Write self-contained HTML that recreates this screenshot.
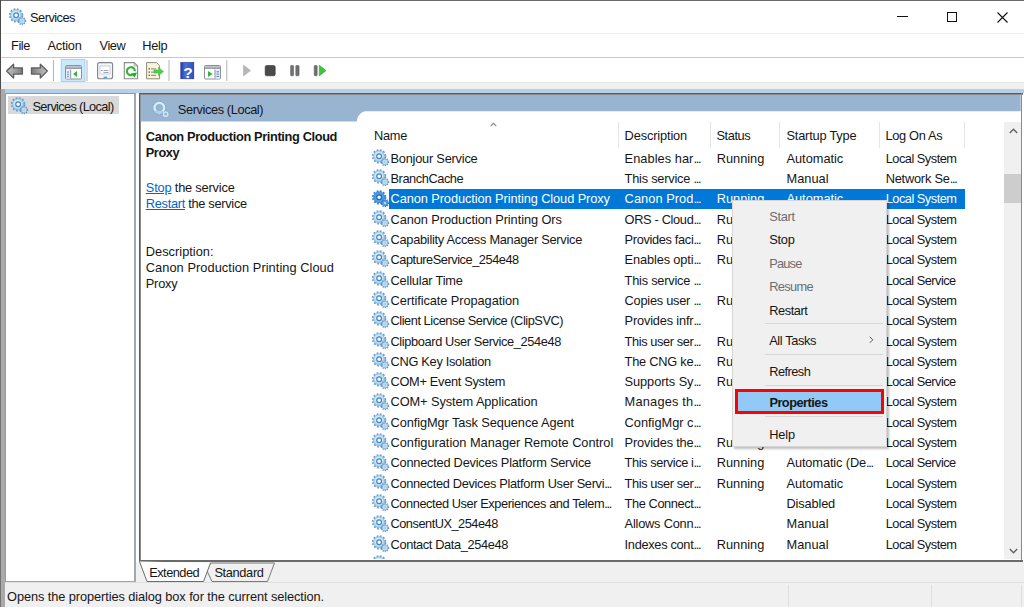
<!DOCTYPE html>
<html><head><meta charset="utf-8"><style>
*{box-sizing:border-box}
html,body{margin:0;padding:0}
body{width:1024px;height:607px;overflow:hidden;position:relative;background:#fff;font-family:"Liberation Sans",sans-serif;font-size:12.8px;color:#161616}
.a{position:absolute}
.t{position:absolute;white-space:nowrap;line-height:16px}
.g{position:absolute;overflow:visible}
.sep{position:absolute;background:#e5e5e5;width:1px}
.el{letter-spacing:-1.3px}
</style></head><body>
<svg width="0" height="0" style="position:absolute"><defs>
<radialGradient id="rg" cx="0.45" cy="0.4" r="0.65"><stop offset="0" stop-color="#e6f7fd"/><stop offset="0.55" stop-color="#bde5f7"/><stop offset="1" stop-color="#8cc2e8"/></radialGradient></defs></svg>

<div class="a" style="left:0;top:0;width:1024px;height:1px;background:#6b6b6b"></div>
<div class="a" style="left:0;top:0;width:1px;height:89px;background:#4a4a4a"></div>
<div class="a" style="left:0;top:89px;width:1px;height:518px;background:#737373"></div>
<svg class="g" style="left:8.20px;top:7.80px" width="18" height="18"><circle cx="8.1" cy="7.3" r="6.35" fill="none" stroke="#6596c9" stroke-width="1.7" stroke-dasharray="1.75 1.58"/>
 <circle cx="8.1" cy="7.3" r="5.5" fill="url(#rg)" stroke="#7eacd8" stroke-width="0.7"/>
 <circle cx="8.1" cy="7.3" r="2.35" fill="#fff" stroke="#4f80b6" stroke-width="1.2"/>
 <circle cx="14.0" cy="13.0" r="3.6" fill="none" stroke="#5f90c4" stroke-width="1.3" stroke-dasharray="1.1 1.2"/>
 <circle cx="14.0" cy="13.0" r="2.9" fill="#c6e6f5" stroke="#6e9ccc" stroke-width="0.7"/>
 <circle cx="14.0" cy="13.0" r="1.0" fill="#f4fbfe" stroke="#6e9ccc" stroke-width="0.5"/></svg>
<div class="t" id="t0" style="left:30.00px;top:9.86px;letter-spacing:-0.510px">Services</div>
<div class="a" style="left:897px;top:16px;width:11px;height:1px;background:#111"></div>
<div class="a" style="left:947px;top:12px;width:10px;height:10px;border:1px solid #111"></div>
<svg class="a" style="left:997px;top:12px" width="11" height="11"><path d="M0.5 0.5L10.5 10.5M10.5 0.5L0.5 10.5" stroke="#111" stroke-width="1.1"/></svg>
<div class="a" style="left:1px;top:33px;width:1023px;height:1px;background:#f0f0f0"></div>
<div class="t" id="t1" style="left:11.10px;top:38.46px;letter-spacing:-0.456px">File</div>
<div class="t" id="t2" style="left:47.40px;top:38.46px;letter-spacing:-0.213px">Action</div>
<div class="t" id="t3" style="left:99.60px;top:38.46px;letter-spacing:-0.454px">View</div>
<div class="t" id="t4" style="left:142.30px;top:38.46px;letter-spacing:-0.332px">Help</div>
<div class="a" style="left:1px;top:57px;width:1023px;height:1px;background:#c8c8c8"></div>
<svg class="a" style="left:0;top:0" width="340" height="86">
<defs>
<linearGradient id="arr" x1="0" y1="0" x2="1" y2="0"><stop offset="0" stop-color="#c4c4c4"/><stop offset="0.6" stop-color="#9a9a9a"/><stop offset="1" stop-color="#7a7a7a"/></linearGradient><linearGradient id="arr2" x1="1" y1="0" x2="0" y2="0"><stop offset="0" stop-color="#c4c4c4"/><stop offset="0.6" stop-color="#9a9a9a"/><stop offset="1" stop-color="#7a7a7a"/></linearGradient>
<linearGradient id="hlp" x1="0" y1="0" x2="1" y2="0"><stop offset="0" stop-color="#1f3fb0"/><stop offset="0.35" stop-color="#4a70d8"/><stop offset="1" stop-color="#2c4fc0"/></linearGradient>
<linearGradient id="tb" x1="0" y1="0" x2="0" y2="1"><stop offset="0" stop-color="#c9ced6"/><stop offset="1" stop-color="#8e96a3"/></linearGradient>
</defs>
<path d="M6.6 71 L13.6 64.2 L13.6 67.9 L22.4 67.9 L22.4 74.1 L13.6 74.1 L13.6 78.1 Z" fill="url(#arr)" stroke="#5c5c5c" stroke-width="1.3" stroke-linejoin="round"/>
<path d="M47.3 71 L40.3 64.2 L40.3 67.9 L31.5 67.9 L31.5 74.1 L40.3 74.1 L40.3 78.1 Z" fill="url(#arr2)" stroke="#5c5c5c" stroke-width="1.3" stroke-linejoin="round"/>
<rect x="53" y="60" width="1" height="21" fill="#b4b4b4"/>
<rect x="61.3" y="59.4" width="23.6" height="22" fill="#cce8ff" stroke="#99d1ff" stroke-width="1"/>
<rect x="65.5" y="65.5" width="16" height="13.5" rx="1" fill="#fff" stroke="#8a8f98" stroke-width="1"/>
<rect x="66" y="66" width="15" height="3" fill="url(#tb)"/>
<rect x="66" y="69.5" width="4.2" height="9" fill="#e8ecf2"/>
<rect x="70.2" y="69.5" width="1" height="9" fill="#8a8f98"/>
<circle cx="68" cy="72" r="0.8" fill="#4a86d0"/><circle cx="68" cy="74.3" r="0.8" fill="#4a86d0"/><circle cx="68" cy="76.6" r="0.8" fill="#4a86d0"/>
<path d="M73 74 L77 71 L77 77 Z" fill="#35b23a"/>
<rect x="86.5" y="60" width="1" height="21" fill="#b4b4b4"/>
<rect x="97.6" y="62.6" width="15" height="16.2" rx="2" fill="#f3f5fa" stroke="#80848c" stroke-width="1.1"/>
<rect x="100" y="66" width="10" height="8" fill="#fff" stroke="#b8bcc8" stroke-width="0.7"/>
<rect x="101" y="70" width="1.5" height="1" fill="#5aaae0"/><rect x="103.5" y="70" width="5" height="0.8" fill="#8a8fa0"/><rect x="103.5" y="72" width="5" height="0.8" fill="#8a8fa0"/>
<rect x="103.6" y="76.6" width="3.5" height="1.6" fill="#29b0e8"/>
<path d="M124.3 62.6 L134.2 62.6 L137.6 66 L137.6 78.8 L124.3 78.8 Z" fill="#fff" stroke="#8c8c8c" stroke-width="1.1"/>
<path d="M134.2 62.8 L134.2 66 L137.4 66" fill="none" stroke="#9a9a9a" stroke-width="0.8"/>
<path d="M134.9 71.2 A4 4 0 1 0 132.4 74.9" fill="none" stroke="#3cb43c" stroke-width="2.2"/>
<path d="M130.8 73.6 L137.2 72.4 L134.6 77.6 Z" fill="#22b022"/>
<path d="M146.6 62.6 L156.5 62.6 L159.6 65.7 L159.6 78.8 L146.6 78.8 Z" fill="#fbf4d8" stroke="#8f8a7a" stroke-width="1"/>
<rect x="148.5" y="68.3" width="1.5" height="1.2" fill="#555"/><rect x="151" y="68.4" width="5" height="1" fill="#7a7fa0"/>
<rect x="148.5" y="71.5" width="1.5" height="1.2" fill="#555"/><rect x="151" y="71.6" width="5" height="1" fill="#7a7fa0"/>
<rect x="148.5" y="74.7" width="1.5" height="1.2" fill="#555"/><rect x="151" y="74.8" width="5" height="1" fill="#7a7fa0"/>
<path d="M154 70 L158.5 70 L158.5 67.6 L163.5 71.5 L158.5 75.4 L158.5 73 L154 73 Z" fill="#4fcf4a" stroke="#3aa83a" stroke-width="0.5"/>
<rect x="168.5" y="60" width="1" height="21" fill="#b4b4b4"/>
<rect x="180.8" y="62.5" width="13" height="16.3" fill="url(#hlp)" stroke="#1a2f8a" stroke-width="0.6"/>
<text x="188" y="77.6" font-family="Liberation Sans" font-weight="bold" font-size="15.5" fill="#fff" text-anchor="middle">?</text>
<rect x="204.5" y="65.5" width="16" height="13.5" rx="1" fill="#fff" stroke="#8a8f98" stroke-width="1"/>
<rect x="205" y="66" width="15" height="3" fill="url(#tb)"/>
<rect x="215.3" y="69.5" width="4.7" height="9" fill="#e8ecf2"/>
<rect x="214.5" y="69.5" width="1" height="9" fill="#8a8f98"/>
<rect x="216.5" y="71.3" width="2.5" height="1" fill="#4a86d0"/><rect x="216.5" y="73.6" width="2.5" height="1" fill="#4a86d0"/><rect x="216.5" y="75.9" width="2.5" height="1" fill="#4a86d0"/>
<path d="M208 71 L212.5 74 L208 77 Z" fill="#35b23a"/>
<rect x="226.3" y="60" width="1" height="21" fill="#b4b4b4"/>
<path d="M243.6 65.3 L250.4 70.6 L243.6 75.8 Z" fill="#b8b8b8" stroke="#a0a0a0" stroke-width="0.6" stroke-linejoin="round"/>
<rect x="265.2" y="65.5" width="10" height="10.3" rx="1.6" fill="#4a4a4a" stroke="#333" stroke-width="0.6"/>
<rect x="290.6" y="65.5" width="3" height="10.3" rx="0.7" fill="#707070" stroke="#555" stroke-width="0.5"/>
<rect x="295.8" y="65.5" width="3.3" height="10.3" rx="0.7" fill="#707070" stroke="#555" stroke-width="0.5"/>
<rect x="314.2" y="65.5" width="3" height="10.3" rx="0.7" fill="#707070" stroke="#555" stroke-width="0.5"/>
<path d="M319.3 65.3 L326 70.6 L319.3 75.9 Z" fill="#3cc83c" stroke="#2aa02a" stroke-width="0.6" stroke-linejoin="round"/>
</svg>
<div class="a" style="left:1px;top:82px;width:1023px;height:7px;background:#f0f0f0;border-top:1px solid #e6e6e6"></div>
<div class="a" style="left:1px;top:89px;width:4px;height:518px;background:#aaaaaa"></div>
<div class="a" style="left:5px;top:89px;width:1019px;height:4px;background:#b6cfe9"></div>
<div class="a" style="left:5px;top:93px;width:131px;height:490px;border:1px solid #959aa2;border-right:2px solid #a2a6ad;border-bottom:2px solid #a2a6ad;background:#fff"></div>
<div class="a" style="left:8.3px;top:95.7px;width:110.4px;height:18.4px;background:#d9d9d9"></div>
<svg class="g" style="left:9.90px;top:96.90px" width="18" height="18"><circle cx="8.1" cy="7.3" r="6.35" fill="none" stroke="#6596c9" stroke-width="1.7" stroke-dasharray="1.75 1.58"/>
 <circle cx="8.1" cy="7.3" r="5.5" fill="url(#rg)" stroke="#7eacd8" stroke-width="0.7"/>
 <circle cx="8.1" cy="7.3" r="2.35" fill="#fff" stroke="#4f80b6" stroke-width="1.2"/>
 <circle cx="14.0" cy="13.0" r="3.6" fill="none" stroke="#5f90c4" stroke-width="1.3" stroke-dasharray="1.1 1.2"/>
 <circle cx="14.0" cy="13.0" r="2.9" fill="#c6e6f5" stroke="#6e9ccc" stroke-width="0.7"/>
 <circle cx="14.0" cy="13.0" r="1.0" fill="#f4fbfe" stroke="#6e9ccc" stroke-width="0.5"/></svg>
<div class="t" id="t5" style="left:32.50px;top:98.76px;letter-spacing:-0.672px">Services (Local)</div>
<div class="a" style="left:138.7px;top:93px;width:884px;height:468.5px;border-left:1px solid #5a5a5a;border-top:1px solid #5a5a5a;background:#fff"></div>
<div class="a" style="left:139.7px;top:94px;width:883px;height:1px;background:#8c8c8c"></div>
<div class="a" style="left:139.7px;top:94px;width:1px;height:467px;background:#8c8c8c"></div>
<div class="a" style="left:1020.7px;top:93px;width:1.8px;height:468.5px;background:#8a8a8a"></div>
<div class="a" style="left:138.7px;top:559.5px;width:884px;height:2px;background:#6a6a6a"></div>
<svg class="a" style="left:0;top:0" width="1024" height="130"><path d="M140.7 95 H1020.7 V111.2 H365.5 Q360.5 111.5 357.6 117.5 L356.7 121.6 H140.7 Z" fill="#99b4d1"/></svg>
<svg class="g" style="left:151.90px;top:101.10px" width="18" height="18"><circle cx="7.3" cy="6.7" r="6.4" fill="none" stroke="#7d9cc0" stroke-width="1.3" stroke-dasharray="1.4 2.3" opacity="0.8"/>
 <circle cx="7.3" cy="6.7" r="4.7" fill="none" stroke="#d6eef9" stroke-width="2.6"/>
 <circle cx="7.3" cy="6.7" r="3.3" fill="none" stroke="#8aa6c6" stroke-width="0.6"/>
 <path d="M3.6 9.6 A4.7 4.7 0 0 0 10.6 10" fill="none" stroke="#a9d4f4" stroke-width="2.2"/>
 <circle cx="13.6" cy="13.2" r="3.3" fill="none" stroke="#7d9cc0" stroke-width="1.1" stroke-dasharray="1.0 1.3" opacity="0.8"/>
 <circle cx="13.6" cy="13.2" r="2.2" fill="none" stroke="#c9e6f5" stroke-width="1.6"/></svg>
<div class="t" id="t6" style="left:177.80px;top:102.36px;letter-spacing:-0.397px">Services (Local)</div>
<div class="t" id="t7" style="left:145.80px;top:128.56px;font-weight:bold;letter-spacing:-0.365px">Canon Production Printing Cloud</div>
<div class="t" id="t8" style="left:145.80px;top:144.96px;font-weight:bold;letter-spacing:-0.459px">Proxy</div>
<div class="t" id="t9" style="left:145.80px;top:179.86px;letter-spacing:-0.185px"><span style="color:#0066cc;text-decoration:underline">Stop</span> the service</div>
<div class="t" id="t10" style="left:145.80px;top:195.86px;letter-spacing:-0.299px"><span style="color:#0066cc;text-decoration:underline">Restart</span> the service</div>
<div class="t" id="t11" style="left:145.80px;top:243.96px;letter-spacing:0.013px">Description:</div>
<div class="t" id="t12" style="left:145.80px;top:259.96px;letter-spacing:0.058px">Canon Production Printing Cloud</div>
<div class="t" id="t13" style="left:145.80px;top:275.76px;letter-spacing:-0.234px">Proxy</div>
<div class="a" style="left:141.0px;top:111.3px;width:863px;height:448.2px;overflow:hidden">
<div class="t" id="t14" style="left:233.00px;top:17.16px;letter-spacing:-0.288px">Name</div>
<svg class="a" style="left:348.6px;top:10.8px" width="8" height="5"><path d="M0.8 4L3.4 1.3L6.2 4" stroke="#8a8a8a" fill="none" stroke-width="1.1"/></svg>
<div class="t" id="t15" style="left:483.60px;top:17.16px;letter-spacing:-0.143px">Description</div>
<div class="t" id="t16" style="left:575.50px;top:17.16px;letter-spacing:-0.429px">Status</div>
<div class="t" id="t17" style="left:645.50px;top:17.16px;letter-spacing:-0.210px">Startup Type</div>
<div class="t" id="t18" style="left:744.50px;top:17.16px;letter-spacing:-0.321px">Log On As</div>
<div class="sep" style="left:477.0px;top:10.9px;height:25.5px"></div>
<div class="sep" style="left:569.0px;top:10.9px;height:25.5px"></div>
<div class="sep" style="left:638.0px;top:10.9px;height:25.5px"></div>
<div class="sep" style="left:738.0px;top:10.9px;height:25.5px"></div>
<div class="sep" style="left:823.0px;top:10.9px;height:25.5px"></div>
<svg class="g" style="left:230.40px;top:37.60px" width="18" height="18"><circle cx="8.1" cy="7.3" r="6.35" fill="none" stroke="#6596c9" stroke-width="1.7" stroke-dasharray="1.75 1.58"/>
 <circle cx="8.1" cy="7.3" r="5.5" fill="url(#rg)" stroke="#7eacd8" stroke-width="0.7"/>
 <circle cx="8.1" cy="7.3" r="2.35" fill="#fff" stroke="#4f80b6" stroke-width="1.2"/>
 <circle cx="14.0" cy="13.0" r="3.6" fill="none" stroke="#5f90c4" stroke-width="1.3" stroke-dasharray="1.1 1.2"/>
 <circle cx="14.0" cy="13.0" r="2.9" fill="#c6e6f5" stroke="#6e9ccc" stroke-width="0.7"/>
 <circle cx="14.0" cy="13.0" r="1.0" fill="#f4fbfe" stroke="#6e9ccc" stroke-width="0.5"/></svg>
<div class="t" id="t19" style="left:249.50px;top:39.36px;letter-spacing:-0.224px">Bonjour Service</div>
<div class="t" id="t20" style="left:483.60px;top:39.36px;letter-spacing:0.047px">Enables har<span class="el">...</span></div>
<div class="t" id="t21" style="left:575.80px;top:39.36px;letter-spacing:-0.035px">Running</div>
<div class="t" id="t22" style="left:645.50px;top:39.36px;letter-spacing:-0.019px">Automatic</div>
<div class="t" id="t23" style="left:744.70px;top:39.36px;letter-spacing:-0.500px">Local System</div>
<svg class="g" style="left:230.40px;top:57.92px" width="18" height="18"><circle cx="8.1" cy="7.3" r="6.35" fill="none" stroke="#6596c9" stroke-width="1.7" stroke-dasharray="1.75 1.58"/>
 <circle cx="8.1" cy="7.3" r="5.5" fill="url(#rg)" stroke="#7eacd8" stroke-width="0.7"/>
 <circle cx="8.1" cy="7.3" r="2.35" fill="#fff" stroke="#4f80b6" stroke-width="1.2"/>
 <circle cx="14.0" cy="13.0" r="3.6" fill="none" stroke="#5f90c4" stroke-width="1.3" stroke-dasharray="1.1 1.2"/>
 <circle cx="14.0" cy="13.0" r="2.9" fill="#c6e6f5" stroke="#6e9ccc" stroke-width="0.7"/>
 <circle cx="14.0" cy="13.0" r="1.0" fill="#f4fbfe" stroke="#6e9ccc" stroke-width="0.5"/></svg>
<div class="t" id="t24" style="left:249.50px;top:59.68px;letter-spacing:-0.440px">BranchCache</div>
<div class="t" id="t25" style="left:483.60px;top:59.68px;letter-spacing:-0.231px">This service <span class="el">...</span></div>
<div class="t" id="t26" style="left:645.50px;top:59.68px;letter-spacing:0.016px">Manual</div>
<div class="t" id="t27" style="left:744.70px;top:59.68px;letter-spacing:-0.219px">Network Se<span class="el">...</span></div>
<div class="a" style="left:248.20px;top:77.53px;width:575.80px;height:20.2px;background:#0078d7"></div>
<svg class="g" style="left:230.40px;top:78.23px" width="18" height="18"><circle cx="8.1" cy="7.3" r="6.35" fill="none" stroke="#2a78d0" stroke-width="1.7" stroke-dasharray="1.75 1.58"/>
 <circle cx="8.1" cy="7.3" r="5.5" fill="#4d9de6" stroke="#2a76cc" stroke-width="0.7"/>
 <circle cx="8.1" cy="7.3" r="2.35" fill="#fff" stroke="#1f65b8" stroke-width="1.2"/>
 <circle cx="14.0" cy="13.0" r="3.6" fill="none" stroke="#2a78d0" stroke-width="1.3" stroke-dasharray="1.1 1.2"/>
 <circle cx="14.0" cy="13.0" r="2.9" fill="#5aa2e8" stroke="#2a76cc" stroke-width="0.7"/>
 <circle cx="14.0" cy="13.0" r="1.0" fill="#cfe6fa"/></svg>
<div class="t" id="t28" style="left:249.50px;top:80.00px;color:#fff;letter-spacing:-0.087px">Canon Production Printing Cloud Proxy</div>
<div class="t" id="t29" style="left:483.60px;top:80.00px;color:#fff;letter-spacing:0.052px">Canon Prod<span class="el">...</span></div>
<div class="t" id="t30" style="left:575.80px;top:80.00px;color:#fff;letter-spacing:-0.035px">Running</div>
<div class="t" id="t31" style="left:645.50px;top:80.00px;color:#fff;letter-spacing:-0.019px">Automatic</div>
<div class="t" id="t32" style="left:744.70px;top:80.00px;color:#fff;letter-spacing:-0.500px">Local System</div>
<svg class="g" style="left:230.40px;top:98.55px" width="18" height="18"><circle cx="8.1" cy="7.3" r="6.35" fill="none" stroke="#6596c9" stroke-width="1.7" stroke-dasharray="1.75 1.58"/>
 <circle cx="8.1" cy="7.3" r="5.5" fill="url(#rg)" stroke="#7eacd8" stroke-width="0.7"/>
 <circle cx="8.1" cy="7.3" r="2.35" fill="#fff" stroke="#4f80b6" stroke-width="1.2"/>
 <circle cx="14.0" cy="13.0" r="3.6" fill="none" stroke="#5f90c4" stroke-width="1.3" stroke-dasharray="1.1 1.2"/>
 <circle cx="14.0" cy="13.0" r="2.9" fill="#c6e6f5" stroke="#6e9ccc" stroke-width="0.7"/>
 <circle cx="14.0" cy="13.0" r="1.0" fill="#f4fbfe" stroke="#6e9ccc" stroke-width="0.5"/></svg>
<div class="t" id="t33" style="left:249.50px;top:100.31px;letter-spacing:-0.076px">Canon Production Printing Ors</div>
<div class="t" id="t34" style="left:483.60px;top:100.31px;letter-spacing:-0.339px">ORS - Cloud<span class="el">...</span></div>
<div class="t" id="t35" style="left:575.80px;top:100.31px;letter-spacing:-0.035px">Running</div>
<div class="t" id="t36" style="left:645.50px;top:100.31px;letter-spacing:-0.019px">Automatic</div>
<div class="t" id="t37" style="left:744.70px;top:100.31px;letter-spacing:-0.500px">Local System</div>
<svg class="g" style="left:230.40px;top:118.86px" width="18" height="18"><circle cx="8.1" cy="7.3" r="6.35" fill="none" stroke="#6596c9" stroke-width="1.7" stroke-dasharray="1.75 1.58"/>
 <circle cx="8.1" cy="7.3" r="5.5" fill="url(#rg)" stroke="#7eacd8" stroke-width="0.7"/>
 <circle cx="8.1" cy="7.3" r="2.35" fill="#fff" stroke="#4f80b6" stroke-width="1.2"/>
 <circle cx="14.0" cy="13.0" r="3.6" fill="none" stroke="#5f90c4" stroke-width="1.3" stroke-dasharray="1.1 1.2"/>
 <circle cx="14.0" cy="13.0" r="2.9" fill="#c6e6f5" stroke="#6e9ccc" stroke-width="0.7"/>
 <circle cx="14.0" cy="13.0" r="1.0" fill="#f4fbfe" stroke="#6e9ccc" stroke-width="0.5"/></svg>
<div class="t" id="t38" style="left:249.50px;top:120.63px;letter-spacing:-0.276px">Capability Access Manager Service</div>
<div class="t" id="t39" style="left:483.60px;top:120.63px;letter-spacing:-0.342px">Provides faci<span class="el">...</span></div>
<div class="t" id="t40" style="left:575.80px;top:120.63px;letter-spacing:-0.035px">Running</div>
<div class="t" id="t41" style="left:645.50px;top:120.63px;letter-spacing:0.016px">Manual</div>
<div class="t" id="t42" style="left:744.70px;top:120.63px;letter-spacing:-0.500px">Local System</div>
<svg class="g" style="left:230.40px;top:139.18px" width="18" height="18"><circle cx="8.1" cy="7.3" r="6.35" fill="none" stroke="#6596c9" stroke-width="1.7" stroke-dasharray="1.75 1.58"/>
 <circle cx="8.1" cy="7.3" r="5.5" fill="url(#rg)" stroke="#7eacd8" stroke-width="0.7"/>
 <circle cx="8.1" cy="7.3" r="2.35" fill="#fff" stroke="#4f80b6" stroke-width="1.2"/>
 <circle cx="14.0" cy="13.0" r="3.6" fill="none" stroke="#5f90c4" stroke-width="1.3" stroke-dasharray="1.1 1.2"/>
 <circle cx="14.0" cy="13.0" r="2.9" fill="#c6e6f5" stroke="#6e9ccc" stroke-width="0.7"/>
 <circle cx="14.0" cy="13.0" r="1.0" fill="#f4fbfe" stroke="#6e9ccc" stroke-width="0.5"/></svg>
<div class="t" id="t43" style="left:249.50px;top:140.94px;letter-spacing:-0.465px">CaptureService_254e48</div>
<div class="t" id="t44" style="left:483.60px;top:140.94px;letter-spacing:-0.135px">Enables opti<span class="el">...</span></div>
<div class="t" id="t45" style="left:575.80px;top:140.94px;letter-spacing:-0.035px">Running</div>
<div class="t" id="t46" style="left:645.50px;top:140.94px;letter-spacing:0.016px">Manual</div>
<div class="t" id="t47" style="left:744.70px;top:140.94px;letter-spacing:-0.500px">Local System</div>
<svg class="g" style="left:230.40px;top:159.50px" width="18" height="18"><circle cx="8.1" cy="7.3" r="6.35" fill="none" stroke="#6596c9" stroke-width="1.7" stroke-dasharray="1.75 1.58"/>
 <circle cx="8.1" cy="7.3" r="5.5" fill="url(#rg)" stroke="#7eacd8" stroke-width="0.7"/>
 <circle cx="8.1" cy="7.3" r="2.35" fill="#fff" stroke="#4f80b6" stroke-width="1.2"/>
 <circle cx="14.0" cy="13.0" r="3.6" fill="none" stroke="#5f90c4" stroke-width="1.3" stroke-dasharray="1.1 1.2"/>
 <circle cx="14.0" cy="13.0" r="2.9" fill="#c6e6f5" stroke="#6e9ccc" stroke-width="0.7"/>
 <circle cx="14.0" cy="13.0" r="1.0" fill="#f4fbfe" stroke="#6e9ccc" stroke-width="0.5"/></svg>
<div class="t" id="t48" style="left:249.50px;top:161.26px;letter-spacing:-0.184px">Cellular Time</div>
<div class="t" id="t49" style="left:483.60px;top:161.26px;letter-spacing:-0.231px">This service <span class="el">...</span></div>
<div class="t" id="t50" style="left:645.50px;top:161.26px;letter-spacing:0.016px">Manual</div>
<div class="t" id="t51" style="left:744.70px;top:161.26px;letter-spacing:-0.527px">Local Service</div>
<svg class="g" style="left:230.40px;top:179.81px" width="18" height="18"><circle cx="8.1" cy="7.3" r="6.35" fill="none" stroke="#6596c9" stroke-width="1.7" stroke-dasharray="1.75 1.58"/>
 <circle cx="8.1" cy="7.3" r="5.5" fill="url(#rg)" stroke="#7eacd8" stroke-width="0.7"/>
 <circle cx="8.1" cy="7.3" r="2.35" fill="#fff" stroke="#4f80b6" stroke-width="1.2"/>
 <circle cx="14.0" cy="13.0" r="3.6" fill="none" stroke="#5f90c4" stroke-width="1.3" stroke-dasharray="1.1 1.2"/>
 <circle cx="14.0" cy="13.0" r="2.9" fill="#c6e6f5" stroke="#6e9ccc" stroke-width="0.7"/>
 <circle cx="14.0" cy="13.0" r="1.0" fill="#f4fbfe" stroke="#6e9ccc" stroke-width="0.5"/></svg>
<div class="t" id="t52" style="left:249.50px;top:181.58px;letter-spacing:-0.072px">Certificate Propagation</div>
<div class="t" id="t53" style="left:483.60px;top:181.58px;letter-spacing:-0.252px">Copies user <span class="el">...</span></div>
<div class="t" id="t54" style="left:575.80px;top:181.58px;letter-spacing:-0.035px">Running</div>
<div class="t" id="t55" style="left:645.50px;top:181.58px;letter-spacing:0.016px">Manual</div>
<div class="t" id="t56" style="left:744.70px;top:181.58px;letter-spacing:-0.500px">Local System</div>
<svg class="g" style="left:230.40px;top:200.13px" width="18" height="18"><circle cx="8.1" cy="7.3" r="6.35" fill="none" stroke="#6596c9" stroke-width="1.7" stroke-dasharray="1.75 1.58"/>
 <circle cx="8.1" cy="7.3" r="5.5" fill="url(#rg)" stroke="#7eacd8" stroke-width="0.7"/>
 <circle cx="8.1" cy="7.3" r="2.35" fill="#fff" stroke="#4f80b6" stroke-width="1.2"/>
 <circle cx="14.0" cy="13.0" r="3.6" fill="none" stroke="#5f90c4" stroke-width="1.3" stroke-dasharray="1.1 1.2"/>
 <circle cx="14.0" cy="13.0" r="2.9" fill="#c6e6f5" stroke="#6e9ccc" stroke-width="0.7"/>
 <circle cx="14.0" cy="13.0" r="1.0" fill="#f4fbfe" stroke="#6e9ccc" stroke-width="0.5"/></svg>
<div class="t" id="t57" style="left:249.50px;top:201.89px;letter-spacing:-0.450px">Client License Service (ClipSVC)</div>
<div class="t" id="t58" style="left:483.60px;top:201.89px;letter-spacing:-0.177px">Provides infr<span class="el">...</span></div>
<div class="t" id="t59" style="left:645.50px;top:201.89px;letter-spacing:0.016px">Manual</div>
<div class="t" id="t60" style="left:744.70px;top:201.89px;letter-spacing:-0.500px">Local System</div>
<svg class="g" style="left:230.40px;top:220.44px" width="18" height="18"><circle cx="8.1" cy="7.3" r="6.35" fill="none" stroke="#6596c9" stroke-width="1.7" stroke-dasharray="1.75 1.58"/>
 <circle cx="8.1" cy="7.3" r="5.5" fill="url(#rg)" stroke="#7eacd8" stroke-width="0.7"/>
 <circle cx="8.1" cy="7.3" r="2.35" fill="#fff" stroke="#4f80b6" stroke-width="1.2"/>
 <circle cx="14.0" cy="13.0" r="3.6" fill="none" stroke="#5f90c4" stroke-width="1.3" stroke-dasharray="1.1 1.2"/>
 <circle cx="14.0" cy="13.0" r="2.9" fill="#c6e6f5" stroke="#6e9ccc" stroke-width="0.7"/>
 <circle cx="14.0" cy="13.0" r="1.0" fill="#f4fbfe" stroke="#6e9ccc" stroke-width="0.5"/></svg>
<div class="t" id="t61" style="left:249.50px;top:222.21px;letter-spacing:-0.377px">Clipboard User Service_254e48</div>
<div class="t" id="t62" style="left:483.60px;top:222.21px;letter-spacing:-0.396px">This user ser<span class="el">...</span></div>
<div class="t" id="t63" style="left:575.80px;top:222.21px;letter-spacing:-0.035px">Running</div>
<div class="t" id="t64" style="left:645.50px;top:222.21px;letter-spacing:0.016px">Manual</div>
<div class="t" id="t65" style="left:744.70px;top:222.21px;letter-spacing:-0.500px">Local System</div>
<svg class="g" style="left:230.40px;top:240.76px" width="18" height="18"><circle cx="8.1" cy="7.3" r="6.35" fill="none" stroke="#6596c9" stroke-width="1.7" stroke-dasharray="1.75 1.58"/>
 <circle cx="8.1" cy="7.3" r="5.5" fill="url(#rg)" stroke="#7eacd8" stroke-width="0.7"/>
 <circle cx="8.1" cy="7.3" r="2.35" fill="#fff" stroke="#4f80b6" stroke-width="1.2"/>
 <circle cx="14.0" cy="13.0" r="3.6" fill="none" stroke="#5f90c4" stroke-width="1.3" stroke-dasharray="1.1 1.2"/>
 <circle cx="14.0" cy="13.0" r="2.9" fill="#c6e6f5" stroke="#6e9ccc" stroke-width="0.7"/>
 <circle cx="14.0" cy="13.0" r="1.0" fill="#f4fbfe" stroke="#6e9ccc" stroke-width="0.5"/></svg>
<div class="t" id="t66" style="left:249.50px;top:242.52px;letter-spacing:-0.293px">CNG Key Isolation</div>
<div class="t" id="t67" style="left:483.60px;top:242.52px;letter-spacing:-0.231px">The CNG ke<span class="el">...</span></div>
<div class="t" id="t68" style="left:575.80px;top:242.52px;letter-spacing:-0.035px">Running</div>
<div class="t" id="t69" style="left:645.50px;top:242.52px;letter-spacing:0.016px">Manual</div>
<div class="t" id="t70" style="left:744.70px;top:242.52px;letter-spacing:-0.500px">Local System</div>
<svg class="g" style="left:230.40px;top:261.08px" width="18" height="18"><circle cx="8.1" cy="7.3" r="6.35" fill="none" stroke="#6596c9" stroke-width="1.7" stroke-dasharray="1.75 1.58"/>
 <circle cx="8.1" cy="7.3" r="5.5" fill="url(#rg)" stroke="#7eacd8" stroke-width="0.7"/>
 <circle cx="8.1" cy="7.3" r="2.35" fill="#fff" stroke="#4f80b6" stroke-width="1.2"/>
 <circle cx="14.0" cy="13.0" r="3.6" fill="none" stroke="#5f90c4" stroke-width="1.3" stroke-dasharray="1.1 1.2"/>
 <circle cx="14.0" cy="13.0" r="2.9" fill="#c6e6f5" stroke="#6e9ccc" stroke-width="0.7"/>
 <circle cx="14.0" cy="13.0" r="1.0" fill="#f4fbfe" stroke="#6e9ccc" stroke-width="0.5"/></svg>
<div class="t" id="t71" style="left:249.50px;top:262.84px;letter-spacing:-0.311px">COM+ Event System</div>
<div class="t" id="t72" style="left:483.60px;top:262.84px;letter-spacing:-0.082px">Supports Sy<span class="el">...</span></div>
<div class="t" id="t73" style="left:575.80px;top:262.84px;letter-spacing:-0.035px">Running</div>
<div class="t" id="t74" style="left:645.50px;top:262.84px;letter-spacing:-0.019px">Automatic</div>
<div class="t" id="t75" style="left:744.70px;top:262.84px;letter-spacing:-0.527px">Local Service</div>
<svg class="g" style="left:230.40px;top:281.39px" width="18" height="18"><circle cx="8.1" cy="7.3" r="6.35" fill="none" stroke="#6596c9" stroke-width="1.7" stroke-dasharray="1.75 1.58"/>
 <circle cx="8.1" cy="7.3" r="5.5" fill="url(#rg)" stroke="#7eacd8" stroke-width="0.7"/>
 <circle cx="8.1" cy="7.3" r="2.35" fill="#fff" stroke="#4f80b6" stroke-width="1.2"/>
 <circle cx="14.0" cy="13.0" r="3.6" fill="none" stroke="#5f90c4" stroke-width="1.3" stroke-dasharray="1.1 1.2"/>
 <circle cx="14.0" cy="13.0" r="2.9" fill="#c6e6f5" stroke="#6e9ccc" stroke-width="0.7"/>
 <circle cx="14.0" cy="13.0" r="1.0" fill="#f4fbfe" stroke="#6e9ccc" stroke-width="0.5"/></svg>
<div class="t" id="t76" style="left:249.50px;top:283.16px;letter-spacing:-0.084px">COM+ System Application</div>
<div class="t" id="t77" style="left:483.60px;top:283.16px;letter-spacing:0.194px">Manages th<span class="el">...</span></div>
<div class="t" id="t78" style="left:645.50px;top:283.16px;letter-spacing:0.016px">Manual</div>
<div class="t" id="t79" style="left:744.70px;top:283.16px;letter-spacing:-0.500px">Local System</div>
<svg class="g" style="left:230.40px;top:301.71px" width="18" height="18"><circle cx="8.1" cy="7.3" r="6.35" fill="none" stroke="#6596c9" stroke-width="1.7" stroke-dasharray="1.75 1.58"/>
 <circle cx="8.1" cy="7.3" r="5.5" fill="url(#rg)" stroke="#7eacd8" stroke-width="0.7"/>
 <circle cx="8.1" cy="7.3" r="2.35" fill="#fff" stroke="#4f80b6" stroke-width="1.2"/>
 <circle cx="14.0" cy="13.0" r="3.6" fill="none" stroke="#5f90c4" stroke-width="1.3" stroke-dasharray="1.1 1.2"/>
 <circle cx="14.0" cy="13.0" r="2.9" fill="#c6e6f5" stroke="#6e9ccc" stroke-width="0.7"/>
 <circle cx="14.0" cy="13.0" r="1.0" fill="#f4fbfe" stroke="#6e9ccc" stroke-width="0.5"/></svg>
<div class="t" id="t80" style="left:249.50px;top:303.47px;letter-spacing:-0.093px">ConfigMgr Task Sequence Agent</div>
<div class="t" id="t81" style="left:483.60px;top:303.47px;letter-spacing:-0.015px">ConfigMgr c<span class="el">...</span></div>
<div class="t" id="t82" style="left:645.50px;top:303.47px;letter-spacing:0.016px">Manual</div>
<div class="t" id="t83" style="left:744.70px;top:303.47px;letter-spacing:-0.500px">Local System</div>
<svg class="g" style="left:230.40px;top:322.02px" width="18" height="18"><circle cx="8.1" cy="7.3" r="6.35" fill="none" stroke="#6596c9" stroke-width="1.7" stroke-dasharray="1.75 1.58"/>
 <circle cx="8.1" cy="7.3" r="5.5" fill="url(#rg)" stroke="#7eacd8" stroke-width="0.7"/>
 <circle cx="8.1" cy="7.3" r="2.35" fill="#fff" stroke="#4f80b6" stroke-width="1.2"/>
 <circle cx="14.0" cy="13.0" r="3.6" fill="none" stroke="#5f90c4" stroke-width="1.3" stroke-dasharray="1.1 1.2"/>
 <circle cx="14.0" cy="13.0" r="2.9" fill="#c6e6f5" stroke="#6e9ccc" stroke-width="0.7"/>
 <circle cx="14.0" cy="13.0" r="1.0" fill="#f4fbfe" stroke="#6e9ccc" stroke-width="0.5"/></svg>
<div class="t" id="t84" style="left:249.50px;top:323.79px;letter-spacing:-0.016px">Configuration Manager Remote Control</div>
<div class="t" id="t85" style="left:483.60px;top:323.79px;letter-spacing:-0.193px">Provides the<span class="el">...</span></div>
<div class="t" id="t86" style="left:575.80px;top:323.79px;letter-spacing:-0.035px">Running</div>
<div class="t" id="t87" style="left:645.50px;top:323.79px;letter-spacing:-0.019px">Automatic</div>
<div class="t" id="t88" style="left:744.70px;top:323.79px;letter-spacing:-0.500px">Local System</div>
<svg class="g" style="left:230.40px;top:342.34px" width="18" height="18"><circle cx="8.1" cy="7.3" r="6.35" fill="none" stroke="#6596c9" stroke-width="1.7" stroke-dasharray="1.75 1.58"/>
 <circle cx="8.1" cy="7.3" r="5.5" fill="url(#rg)" stroke="#7eacd8" stroke-width="0.7"/>
 <circle cx="8.1" cy="7.3" r="2.35" fill="#fff" stroke="#4f80b6" stroke-width="1.2"/>
 <circle cx="14.0" cy="13.0" r="3.6" fill="none" stroke="#5f90c4" stroke-width="1.3" stroke-dasharray="1.1 1.2"/>
 <circle cx="14.0" cy="13.0" r="2.9" fill="#c6e6f5" stroke="#6e9ccc" stroke-width="0.7"/>
 <circle cx="14.0" cy="13.0" r="1.0" fill="#f4fbfe" stroke="#6e9ccc" stroke-width="0.5"/></svg>
<div class="t" id="t89" style="left:249.50px;top:344.10px;letter-spacing:-0.233px">Connected Devices Platform Service</div>
<div class="t" id="t90" style="left:483.60px;top:344.10px;letter-spacing:-0.418px">This service i<span class="el">...</span></div>
<div class="t" id="t91" style="left:575.80px;top:344.10px;letter-spacing:-0.035px">Running</div>
<div class="t" id="t92" style="left:645.50px;top:344.10px;letter-spacing:-0.120px">Automatic (De<span class="el">...</span></div>
<div class="t" id="t93" style="left:744.70px;top:344.10px;letter-spacing:-0.527px">Local Service</div>
<svg class="g" style="left:230.40px;top:362.66px" width="18" height="18"><circle cx="8.1" cy="7.3" r="6.35" fill="none" stroke="#6596c9" stroke-width="1.7" stroke-dasharray="1.75 1.58"/>
 <circle cx="8.1" cy="7.3" r="5.5" fill="url(#rg)" stroke="#7eacd8" stroke-width="0.7"/>
 <circle cx="8.1" cy="7.3" r="2.35" fill="#fff" stroke="#4f80b6" stroke-width="1.2"/>
 <circle cx="14.0" cy="13.0" r="3.6" fill="none" stroke="#5f90c4" stroke-width="1.3" stroke-dasharray="1.1 1.2"/>
 <circle cx="14.0" cy="13.0" r="2.9" fill="#c6e6f5" stroke="#6e9ccc" stroke-width="0.7"/>
 <circle cx="14.0" cy="13.0" r="1.0" fill="#f4fbfe" stroke="#6e9ccc" stroke-width="0.5"/></svg>
<div class="t" id="t94" style="left:249.50px;top:364.42px;letter-spacing:-0.317px">Connected Devices Platform User Servi<span class="el">...</span></div>
<div class="t" id="t95" style="left:483.60px;top:364.42px;letter-spacing:-0.396px">This user ser<span class="el">...</span></div>
<div class="t" id="t96" style="left:575.80px;top:364.42px;letter-spacing:-0.035px">Running</div>
<div class="t" id="t97" style="left:645.50px;top:364.42px;letter-spacing:-0.019px">Automatic</div>
<div class="t" id="t98" style="left:744.70px;top:364.42px;letter-spacing:-0.500px">Local System</div>
<svg class="g" style="left:230.40px;top:382.97px" width="18" height="18"><circle cx="8.1" cy="7.3" r="6.35" fill="none" stroke="#6596c9" stroke-width="1.7" stroke-dasharray="1.75 1.58"/>
 <circle cx="8.1" cy="7.3" r="5.5" fill="url(#rg)" stroke="#7eacd8" stroke-width="0.7"/>
 <circle cx="8.1" cy="7.3" r="2.35" fill="#fff" stroke="#4f80b6" stroke-width="1.2"/>
 <circle cx="14.0" cy="13.0" r="3.6" fill="none" stroke="#5f90c4" stroke-width="1.3" stroke-dasharray="1.1 1.2"/>
 <circle cx="14.0" cy="13.0" r="2.9" fill="#c6e6f5" stroke="#6e9ccc" stroke-width="0.7"/>
 <circle cx="14.0" cy="13.0" r="1.0" fill="#f4fbfe" stroke="#6e9ccc" stroke-width="0.5"/></svg>
<div class="t" id="t99" style="left:249.50px;top:384.74px;letter-spacing:-0.420px">Connected User Experiences and Telem<span class="el">...</span></div>
<div class="t" id="t100" style="left:483.60px;top:384.74px;letter-spacing:-0.406px">The Connect<span class="el">...</span></div>
<div class="t" id="t101" style="left:645.50px;top:384.74px;letter-spacing:-0.153px">Disabled</div>
<div class="t" id="t102" style="left:744.70px;top:384.74px;letter-spacing:-0.500px">Local System</div>
<svg class="g" style="left:230.40px;top:403.29px" width="18" height="18"><circle cx="8.1" cy="7.3" r="6.35" fill="none" stroke="#6596c9" stroke-width="1.7" stroke-dasharray="1.75 1.58"/>
 <circle cx="8.1" cy="7.3" r="5.5" fill="url(#rg)" stroke="#7eacd8" stroke-width="0.7"/>
 <circle cx="8.1" cy="7.3" r="2.35" fill="#fff" stroke="#4f80b6" stroke-width="1.2"/>
 <circle cx="14.0" cy="13.0" r="3.6" fill="none" stroke="#5f90c4" stroke-width="1.3" stroke-dasharray="1.1 1.2"/>
 <circle cx="14.0" cy="13.0" r="2.9" fill="#c6e6f5" stroke="#6e9ccc" stroke-width="0.7"/>
 <circle cx="14.0" cy="13.0" r="1.0" fill="#f4fbfe" stroke="#6e9ccc" stroke-width="0.5"/></svg>
<div class="t" id="t103" style="left:249.50px;top:405.05px;letter-spacing:-0.495px">ConsentUX_254e48</div>
<div class="t" id="t104" style="left:483.60px;top:405.05px;letter-spacing:-0.211px">Allows Conn<span class="el">...</span></div>
<div class="t" id="t105" style="left:645.50px;top:405.05px;letter-spacing:0.016px">Manual</div>
<div class="t" id="t106" style="left:744.70px;top:405.05px;letter-spacing:-0.500px">Local System</div>
<svg class="g" style="left:230.40px;top:423.60px" width="18" height="18"><circle cx="8.1" cy="7.3" r="6.35" fill="none" stroke="#6596c9" stroke-width="1.7" stroke-dasharray="1.75 1.58"/>
 <circle cx="8.1" cy="7.3" r="5.5" fill="url(#rg)" stroke="#7eacd8" stroke-width="0.7"/>
 <circle cx="8.1" cy="7.3" r="2.35" fill="#fff" stroke="#4f80b6" stroke-width="1.2"/>
 <circle cx="14.0" cy="13.0" r="3.6" fill="none" stroke="#5f90c4" stroke-width="1.3" stroke-dasharray="1.1 1.2"/>
 <circle cx="14.0" cy="13.0" r="2.9" fill="#c6e6f5" stroke="#6e9ccc" stroke-width="0.7"/>
 <circle cx="14.0" cy="13.0" r="1.0" fill="#f4fbfe" stroke="#6e9ccc" stroke-width="0.5"/></svg>
<div class="t" id="t107" style="left:249.50px;top:425.37px;letter-spacing:-0.365px">Contact Data_254e48</div>
<div class="t" id="t108" style="left:483.60px;top:425.37px;letter-spacing:-0.313px">Indexes cont<span class="el">...</span></div>
<div class="t" id="t109" style="left:575.80px;top:425.37px;letter-spacing:-0.035px">Running</div>
<div class="t" id="t110" style="left:645.50px;top:425.37px;letter-spacing:0.016px">Manual</div>
<div class="t" id="t111" style="left:744.70px;top:425.37px;letter-spacing:-0.500px">Local System</div>
<svg class="g" style="left:230.40px;top:443.92px" width="18" height="18"><circle cx="8.1" cy="7.3" r="6.35" fill="none" stroke="#6596c9" stroke-width="1.7" stroke-dasharray="1.75 1.58"/>
 <circle cx="8.1" cy="7.3" r="5.5" fill="url(#rg)" stroke="#7eacd8" stroke-width="0.7"/>
 <circle cx="8.1" cy="7.3" r="2.35" fill="#fff" stroke="#4f80b6" stroke-width="1.2"/>
 <circle cx="14.0" cy="13.0" r="3.6" fill="none" stroke="#5f90c4" stroke-width="1.3" stroke-dasharray="1.1 1.2"/>
 <circle cx="14.0" cy="13.0" r="2.9" fill="#c6e6f5" stroke="#6e9ccc" stroke-width="0.7"/>
 <circle cx="14.0" cy="13.0" r="1.0" fill="#f4fbfe" stroke="#6e9ccc" stroke-width="0.5"/></svg>
<div class="t" id="t112" style="left:249.50px;top:445.68px;letter-spacing:-0.458px">Contacts_254e48</div>
<div class="t" id="t113" style="left:483.60px;top:445.68px;letter-spacing:-0.313px">Indexes cont<span class="el">...</span></div>
<div class="t" id="t114" style="left:575.80px;top:445.68px;letter-spacing:-0.035px">Running</div>
<div class="t" id="t115" style="left:645.50px;top:445.68px;letter-spacing:-0.019px">Automatic</div>
<div class="t" id="t116" style="left:744.70px;top:445.68px;letter-spacing:-0.500px">Local System</div>
</div>
<div class="a" style="left:1004.2px;top:122.3px;width:16.5px;height:437.2px;background:#f0f0f0"></div>
<div class="a" style="left:1004.2px;top:173.8px;width:16.5px;height:29.2px;background:#cdcdcd"></div>
<svg class="a" style="left:1008.5px;top:128px" width="9" height="6"><path d="M0.8 5L4.5 1.2L8.2 5" stroke="#606060" fill="none" stroke-width="1.3"/></svg>
<svg class="a" style="left:1008.5px;top:547.5px" width="9" height="6"><path d="M0.8 1L4.5 4.8L8.2 1" stroke="#606060" fill="none" stroke-width="1.3"/></svg>
<div class="a" style="left:136px;top:561.5px;width:888px;height:21px;background:#f0f0f0"></div>
<svg class="a" style="left:136px;top:560px" width="160" height="23"><path d="M74.5 3 L138.5 3 L131.5 21.5 L76 21.5 L70.8 10.5 Z" fill="#f0f0f0" stroke="#7a7a7a" stroke-width="1"/><path d="M3.5 1.5 L11 21.5 L67.5 21.5 L74.5 3" fill="#fff" stroke="#6a6a6a" stroke-width="1"/></svg>
<div class="t" id="t117" style="left:149.20px;top:565.36px;letter-spacing:-0.510px">Extended</div>
<div class="t" id="t118" style="left:214.40px;top:565.36px;letter-spacing:-0.342px">Standard</div>
<div class="a" style="left:5px;top:582px;width:1019px;height:25px;background:#f0f0f0;border-top:1px solid #dedede"></div>
<div class="a" style="left:788px;top:584.5px;width:1px;height:23px;background:#dedede"></div>
<div class="a" style="left:931px;top:584.5px;width:1px;height:23px;background:#dedede"></div>
<div class="a" style="left:1021px;top:584.5px;width:1px;height:23px;background:#dedede"></div>
<div class="t" id="t119" style="left:7.10px;top:588.56px;letter-spacing:-0.091px">Opens the properties dialog box for the current selection.</div>
<div class="a" style="left:734px;top:202px;width:155px;height:247px;background:rgba(0,0,0,0.25);filter:blur(1px)"></div>
<div class="a" style="left:732.3px;top:200.2px;width:154.7px;height:246.8px;background:#f0f0f0;border:1px solid #d6d6d6"></div>
<div class="t" id="t120" style="left:769.20px;top:208.66px;color:#6d6d6d;letter-spacing:-0.297px">Start</div>
<div class="t" id="t121" style="left:769.20px;top:231.96px;letter-spacing:-0.246px">Stop</div>
<div class="t" id="t122" style="left:769.20px;top:255.76px;color:#6d6d6d;letter-spacing:-0.806px">Pause</div>
<div class="t" id="t123" style="left:769.20px;top:279.46px;color:#6d6d6d;letter-spacing:-0.643px">Resume</div>
<div class="t" id="t124" style="left:769.20px;top:302.56px;letter-spacing:-0.426px">Restart</div>
<div class="t" id="t125" style="left:769.20px;top:333.46px;letter-spacing:-0.386px">All Tasks</div>
<div class="t" id="t126" style="left:769.20px;top:364.16px;letter-spacing:-0.522px">Refresh</div>
<div class="t" id="t127" style="left:769.20px;top:426.56px;letter-spacing:-0.147px">Help</div>
<div class="a" style="left:765.4px;top:322.8px;width:118px;height:1px;background:#d7d7d7"></div>
<div class="a" style="left:765.4px;top:353.7px;width:118px;height:1px;background:#d7d7d7"></div>
<div class="a" style="left:765.4px;top:384.5px;width:118px;height:1px;background:#d7d7d7"></div>
<div class="a" style="left:765.4px;top:415.5px;width:118px;height:1px;background:#d7d7d7"></div>
<svg class="a" style="left:869px;top:336px" width="5" height="8"><path d="M0.8 0.8L3.8 3.8L0.8 6.8" stroke="#555" fill="none" stroke-width="1"/></svg>
<div class="a" style="left:734.9px;top:388.9px;width:149.1px;height:24.9px;background:#91c9f7;border:3.1px solid #ff0000"></div>
<div class="t" id="t128" style="left:769.40px;top:395.36px;font-weight:bold;letter-spacing:-0.521px">Properties</div>
</body></html>
